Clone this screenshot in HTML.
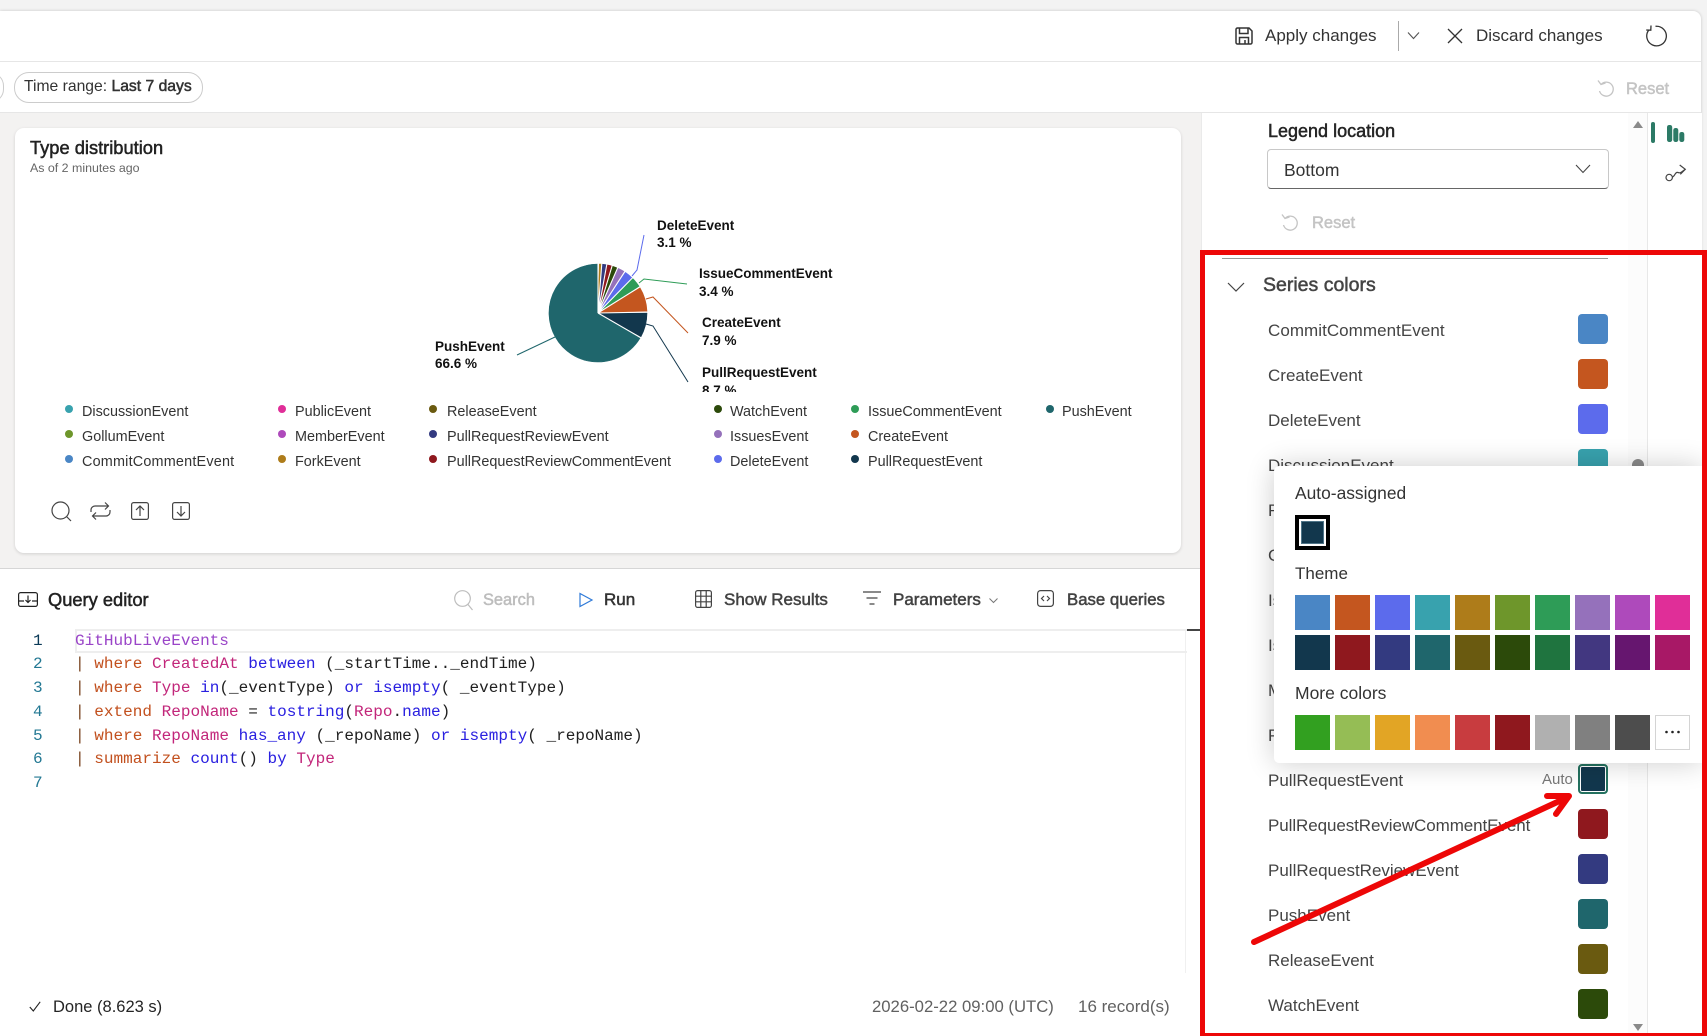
<!DOCTYPE html>
<html><head><meta charset="utf-8"><title>Type distribution</title>
<style>
html,body{margin:0;padding:0;width:1707px;height:1036px;overflow:hidden;background:#f3f3f3}
body{position:relative;font-family:"Liberation Sans",sans-serif;color:#242424}
.a{position:absolute}
.t{position:absolute;white-space:nowrap;line-height:24px;height:24px}
.s{-webkit-text-stroke:.5px currentColor}
svg{position:absolute;overflow:visible}
.ui{font-size:17px;color:#333}
.lg{font-size:14.4px;color:#333}
.dot{position:absolute;width:8px;height:8px;border-radius:50%}
.cl{font-size:13.5px;font-weight:700;color:#111}
.row{font-size:17px;color:#444}
.sw{position:absolute;left:1578px;width:30px;height:30px;border-radius:4px}
.pc{position:absolute;width:35px;height:35px}
.tb{font-size:17px;color:#424242;-webkit-text-stroke:.5px currentColor}
.code{font-family:"Liberation Mono",monospace;font-size:16.05px;color:#1f1f1f}
.n{font-family:"Liberation Mono",monospace;font-size:16.05px;color:#237893}
.k{color:#c2501e}.f{color:#c2267a}.u{color:#2a20e0}.p{color:#7a4520}
</style></head><body>

<!-- main surface -->
<div class="a" style="left:0;top:11px;width:1701px;height:1025px;background:#fff;border-top-right-radius:8px;box-shadow:0 0 3px rgba(0,0,0,.18)"></div>
<div class="a" style="left:0;top:61px;width:1701px;height:1px;background:#e6e6e6"></div>
<div class="a" style="left:0;top:112px;width:1701px;height:1px;background:#e6e6e6"></div>
<div class="a" style="left:0;top:113px;width:1201px;height:455px;background:#f3f2f1"></div>
<div class="a" style="left:0;top:568px;width:1201px;height:1px;background:#d6d6d6"></div>

<!-- toolbar -->
<svg style="left:1235px;top:27px" width="18" height="18" viewBox="0 0 18 18" fill="none" stroke="#333" stroke-width="1.5"><path d="M1 2.500A1.500 1.500 0 0 1 2.500 1H14l3 3v11.500A1.500 1.500 0 0 1 15.500 17h-13A1.500 1.500 0 0 1 1 15.500z"/><path d="M4.500 1v5.500h8.500V1M4.500 17v-6.500h9V17M10 13v4"/></svg>
<div class="t ui" style="left:1265px;top:24px">Apply changes</div>
<div class="a" style="left:1398px;top:21px;width:1px;height:30px;background:#aaa"></div>
<svg style="left:1407px;top:31px" width="13" height="9" viewBox="0 0 13 9" fill="none" stroke="#555" stroke-width="1.100"><path d="M1 1.500l5.500 6 5.500-6"/></svg>
<svg style="left:1447px;top:28px" width="16" height="16" viewBox="0 0 16 16" fill="none" stroke="#333" stroke-width="1.300"><path d="M1 1l14 14M15 1L1 15"/></svg>
<div class="t ui" style="left:1476px;top:24px">Discard changes</div>
<svg style="left:1644px;top:25px" width="22" height="22" viewBox="0 0 22 22" fill="none" stroke="#333" stroke-width="1.300"><path d="M5 4.800A9.800 9.800 0 1 0 11.500 1.300"/><path d="M7 .5L6.800 5.200 2.200 5"/></svg>

<!-- filter bar -->
<div class="a" style="left:-24px;top:72px;width:26px;height:29px;border:1px solid #ccc;border-radius:15px"></div>
<div class="a" style="left:14px;top:72px;width:187px;height:29px;border:1px solid #ccc;border-radius:15px;background:#fff"></div>
<div class="t" style="left:24px;top:75px;font-size:15.700px;color:#333">Time range: <span class="s">Last 7 days</span></div>
<svg style="left:1597px;top:79px" width="18" height="20" viewBox="0 0 18 20" fill="none" stroke="#c4c4c4" stroke-width="1.300"><path d="M4 5.500A7 7 0 1 1 2.500 12"/><path d="M1 1.500l3 4 4.500-1.500"/></svg>
<div class="t s" style="left:1626px;top:77px;font-size:16.500px;color:#c4c4c4">Reset</div>

<!-- chart card -->
<div class="a" style="left:15px;top:128px;width:1166px;height:425px;background:#fff;border-radius:9px;box-shadow:0 1px 3px rgba(0,0,0,.14)"></div>
<div class="t s" style="left:30px;top:136px;font-size:18.300px;color:#222">Type distribution</div>
<div class="t" style="left:30px;top:156px;font-size:12.400px;color:#666">As of 2 minutes ago</div>

<svg style="left:0;top:0" width="1707" height="1036">
<g stroke-width=".6" stroke-linejoin="round">
<path stroke="#1f666c" fill="#1f666c" d="M598 313L640 338.200A49 49 0 1 1 598 264Z"/>
<path stroke="#12374d" fill="#12374d" d="M598 313L647 313A49 49 0 0 1 640.900 336.800Z"/>
<path stroke="#c4561f" fill="#c4561f" d="M598 313L640 287.800A49 49 0 0 1 647 311.300Z"/>
<path stroke="#2e9c57" fill="#2e9c57" d="M598 313L632.600 278.400A49 49 0 0 1 639.100 286.300Z"/>
<path stroke="#5c6bec" fill="#5c6bec" d="M598 313L625.400 272.400A49 49 0 0 1 632 277.800Z"/>
<path stroke="#9571bb" fill="#9571bb" d="M598 313L618.300 268.400A49 49 0 0 1 624.700 271.900Z"/>
<path stroke="#2c4a0a" fill="#2c4a0a" d="M598 313L612.700 266.300A49 49 0 0 1 617.500 268.100Z"/>
<path stroke="#8f181e" fill="#8f181e" d="M598 313L607.300 264.900A49 49 0 0 1 611.900 266Z"/>
<path stroke="#333a80" fill="#333a80" d="M598 313L602.300 264.200A49 49 0 0 1 606.500 264.700Z"/>
<path stroke="#ae7c1a" fill="#ae7c1a" d="M598 313L599.300 264A49 49 0 0 1 601.400 264.100Z"/>
</g>
<path fill="none" stroke="#fff" stroke-width="1.100" d="M598 313L598 262M598 313L601.900 262.200M598 313L607.100 262.800M598 313L612.600 264.200M598 313L618.300 266.300M598 313L625.600 270.300M598 313L633.700 276.600M598 313L641.200 286M598 313L649 312.100M598 313L642.100 338.500"/>
<g fill="none" stroke-width="1">
<path stroke="#5c6bec" d="M644 235L637 270L632 276"/>
<path stroke="#2e9c57" d="M687 284L644 279L639 283"/>
<path stroke="#c4561f" d="M688 333L653 297L646 299"/>
<path stroke="#12374d" d="M688 382L653 326L646 324"/>
<path stroke="#1f666c" d="M517 355L555 337"/>
</g>
</svg>
<div class="t cl" style="left:657px;top:214px">DeleteEvent</div><div class="t cl" style="left:657px;top:231px">3.1 %</div>
<div class="t cl" style="left:699px;top:262px">IssueCommentEvent</div><div class="t cl" style="left:699px;top:280px">3.4 %</div>
<div class="t cl" style="left:702px;top:311px">CreateEvent</div><div class="t cl" style="left:702px;top:329px">7.9 %</div>
<div class="t cl" style="left:702px;top:361px">PullRequestEvent</div>
<div class="a" style="left:702px;top:380px;width:80px;height:12px;overflow:hidden"><div class="t cl" style="left:0;top:-1px">8.7 %</div></div>
<div class="t cl" style="left:435px;top:335px">PushEvent</div><div class="t cl" style="left:435px;top:352px">66.6 %</div>

<!-- legend -->
<span class="dot" style="left:65px;top:405px;background:#38a2ae"></span><div class="t lg" style="left:82px;top:400px">DiscussionEvent</div>
<span class="dot" style="left:65px;top:430px;background:#6e962b"></span><div class="t lg" style="left:82px;top:425px">GollumEvent</div>
<span class="dot" style="left:65px;top:455px;background:#4a86c5"></span><div class="t lg" style="left:82px;top:450px;letter-spacing:.2px">CommitCommentEvent</div>
<span class="dot" style="left:278px;top:405px;background:#e02e98"></span><div class="t lg" style="left:295px;top:400px">PublicEvent</div>
<span class="dot" style="left:278px;top:430px;background:#ae4abb"></span><div class="t lg" style="left:295px;top:425px">MemberEvent</div>
<span class="dot" style="left:278px;top:455px;background:#ae7c1a"></span><div class="t lg" style="left:295px;top:450px">ForkEvent</div>
<span class="dot" style="left:429px;top:405px;background:#6a5a10"></span><div class="t lg" style="left:447px;top:400px">ReleaseEvent</div>
<span class="dot" style="left:429px;top:430px;background:#333a80"></span><div class="t lg" style="left:447px;top:425px">PullRequestReviewEvent</div>
<span class="dot" style="left:429px;top:455px;background:#8f181e"></span><div class="t lg" style="left:447px;top:450px">PullRequestReviewCommentEvent</div>
<span class="dot" style="left:714px;top:405px;background:#2c4a0a"></span><div class="t lg" style="left:730px;top:400px">WatchEvent</div>
<span class="dot" style="left:714px;top:430px;background:#9571bb"></span><div class="t lg" style="left:730px;top:425px">IssuesEvent</div>
<span class="dot" style="left:714px;top:455px;background:#5c6bec"></span><div class="t lg" style="left:730px;top:450px">DeleteEvent</div>
<span class="dot" style="left:851px;top:405px;background:#2e9c57"></span><div class="t lg" style="left:868px;top:400px">IssueCommentEvent</div>
<span class="dot" style="left:851px;top:430px;background:#c4561f"></span><div class="t lg" style="left:868px;top:425px">CreateEvent</div>
<span class="dot" style="left:851px;top:455px;background:#12374d"></span><div class="t lg" style="left:868px;top:450px">PullRequestEvent</div>
<span class="dot" style="left:1046px;top:405px;background:#1f666c"></span><div class="t lg" style="left:1062px;top:400px">PushEvent</div>

<!-- chart tool icons -->
<svg style="left:51px;top:501px" width="21" height="21" viewBox="0 0 21 21" fill="none" stroke="#444" stroke-width="1.200"><circle cx="9.500" cy="9.500" r="8.500"/><path d="M15.500 15.500L20 20"/></svg>
<svg style="left:90px;top:501px" width="21" height="20" viewBox="0 0 21 20" fill="none" stroke="#444" stroke-width="1.200"><path d="M1 11V9a4 4 0 0 1 4-4h13M15 1.500L18.500 5 15 8.500"/><path d="M20 9v2a4 4 0 0 1-4 4H3M6 11.500L2.500 15 6 18.500"/></svg>
<svg style="left:131px;top:502px" width="18" height="18" viewBox="0 0 18 18" fill="none" stroke="#444" stroke-width="1.200"><rect x=".6" y=".6" width="16.800" height="16.800" rx="2"/><path d="M9 14V4M5 8l4-4 4 4"/></svg>
<svg style="left:172px;top:502px" width="18" height="18" viewBox="0 0 18 18" fill="none" stroke="#444" stroke-width="1.200"><rect x=".6" y=".6" width="16.800" height="16.800" rx="2"/><path d="M9 4v10M5 10l4 4 4-4"/></svg>

<!-- query editor toolbar -->
<svg style="left:18px;top:592px" width="20" height="15" viewBox="0 0 20 15" fill="none" stroke="#222" stroke-width="1.200"><rect x=".6" y=".6" width="18.800" height="13.800" rx="2"/><path d="M1 9h5M14 9h5M10 3.500v6.500M7.500 8l2.500 2.500L12.500 8"/></svg>
<div class="t s" style="left:48px;top:588px;font-size:18.300px;color:#222">Query editor</div>
<svg style="left:454px;top:590px" width="19" height="21" viewBox="0 0 19 21" fill="none" stroke="#bdbdbd" stroke-width="1.200"><circle cx="8.500" cy="8.500" r="7.800"/><path d="M14 14.500L18.500 20"/></svg>
<div class="t tb" style="left:483px;top:588px;font-size:16.400px;color:#bdbdbd">Search</div>
<svg style="left:579px;top:592px" width="14" height="16" viewBox="0 0 14 16" fill="none" stroke="#2f7ad8" stroke-width="1.200"><path d="M1 1.500L13 8 1 14.500z"/></svg>
<div class="t tb" style="left:604px;top:588px;color:#333">Run</div>
<svg style="left:695px;top:590px" width="17" height="18" viewBox="0 0 17 18" fill="none" stroke="#444" stroke-width="1.200"><rect x=".6" y=".6" width="15.800" height="16.800" rx="2"/><path d="M5.800 1v16M11.200 1v16M1 6.200h15M1 11.800h15"/></svg>
<div class="t tb" style="left:724px;top:588px">Show Results</div>
<svg style="left:863px;top:591px" width="18" height="14" viewBox="0 0 18 14" fill="none" stroke="#444" stroke-width="1.200"><path d="M0 1h18M3.500 7h11M6.500 13h5"/></svg>
<div class="t tb" style="left:893px;top:588px">Parameters</div>
<svg style="left:989px;top:598px" width="9" height="6" viewBox="0 0 9 6" fill="none" stroke="#777" stroke-width="1"><path d="M.5 .5l4 4 4-4"/></svg>
<svg style="left:1037px;top:590px" width="17" height="17" viewBox="0 0 17 17" fill="none" stroke="#444" stroke-width="1.200"><rect x=".6" y=".6" width="15.800" height="15.800" rx="3"/><path d="M7 6L4.500 8.500 7 11M10 6l2.500 2.500L10 11"/></svg>
<div class="t tb" style="left:1067px;top:588px;font-size:16.800px">Base queries</div>
<div class="a" style="left:1185px;top:629px;width:16px;height:1.500px;background:#444"></div>
<div class="a" style="left:1185px;top:630px;width:1px;height:343px;background:#f0f0f0"></div>

<!-- code editor -->
<div class="a" style="left:75px;top:629px;width:1110px;height:20px;border:2px solid #eee;border-right:0"></div>
<div class="t n" style="left:33px;top:629px;color:#0b3a57">1</div>
<div class="t n" style="left:33px;top:652px">2</div>
<div class="t n" style="left:33px;top:676px">3</div>
<div class="t n" style="left:33px;top:700px">4</div>
<div class="t n" style="left:33px;top:724px">5</div>
<div class="t n" style="left:33px;top:747px">6</div>
<div class="t n" style="left:33px;top:771px">7</div>
<div class="t code" style="left:75px;top:629px;color:#9a45c8">GitHubLiveEvents</div>
<div class="t code" style="left:75px;top:652px"><span class="p">|</span> <span class="k">where</span> <span class="f">CreatedAt</span> <span class="u">between</span> (_startTime.._endTime)</div>
<div class="t code" style="left:75px;top:676px"><span class="p">|</span> <span class="k">where</span> <span class="f">Type</span> <span class="u">in</span>(_eventType) <span class="u">or</span> <span class="u">isempty</span>( _eventType)</div>
<div class="t code" style="left:75px;top:700px"><span class="p">|</span> <span class="k">extend</span> <span class="f">RepoName</span> = <span class="u">tostring</span>(<span class="f">Repo</span>.<span class="u">name</span>)</div>
<div class="t code" style="left:75px;top:724px"><span class="p">|</span> <span class="k">where</span> <span class="f">RepoName</span> <span class="u">has_any</span> (_repoName) <span class="u">or</span> <span class="u">isempty</span>( _repoName)</div>
<div class="t code" style="left:75px;top:747px"><span class="p">|</span> <span class="k">summarize</span> <span class="u">count</span>() <span class="u">by</span> <span class="f">Type</span></div>

<!-- status -->
<svg style="left:29px;top:1001px" width="12" height="11" viewBox="0 0 12 11" fill="none" stroke="#222" stroke-width="1.100"><path d="M.8 6l3.500 4L11.200 .8"/></svg>
<div class="t" style="left:53px;top:995px;font-size:16.500px;color:#242424">Done (8.623 s)</div>
<div class="t" style="left:872px;top:995px;font-size:16.700px;color:#616161">2026-02-22 09:00 (UTC)</div>
<div class="t" style="left:1078px;top:995px;font-size:17px;color:#616161">16 record(s)</div>

<!-- right panel -->
<div class="a" style="left:1201px;top:113px;width:500px;height:923px;background:#fff;border-left:1px solid #eaeaea"></div>
<div class="a" style="left:1628px;top:113px;width:19px;height:923px;background:#fcfcfc"></div>
<div class="a" style="left:1647px;top:113px;width:1px;height:923px;background:#e8e8e8"></div>
<div class="a" style="left:1651px;top:122px;width:4px;height:21px;background:#2c7a66;border-radius:2px"></div>
<svg style="left:1667px;top:125px" width="18" height="17" viewBox="0 0 18 17" fill="#2c7a66"><rect x="0" y="0" width="5.200" height="17" rx="2.200"/><rect x="6.300" y="3" width="5" height="14" rx="2.200"/><rect x="12.300" y="7" width="5" height="10" rx="2.200"/></svg>
<svg style="left:1665px;top:165px" width="22" height="18" viewBox="0 0 22 18" fill="none" stroke="#444" stroke-width="1.200"><circle cx="4.200" cy="12.500" r="3.200"/><path d="M7.300 12C10 11.500 10 6.500 13 7.500S16 7 20.300 4.300"/><path d="M14.700 0L20.300 4.300 15.300 9.300"/></svg>
<div class="t s" style="left:1268px;top:119px;font-size:18px;color:#242424">Legend location</div>
<div class="a" style="left:1267px;top:149px;width:340px;height:38px;border:1px solid #c8c8c8;border-bottom:1.500px solid #666;border-radius:4px;background:#fff"></div>
<div class="t" style="left:1284px;top:158px;font-size:17.500px;color:#333">Bottom</div>
<svg style="left:1575px;top:164px" width="16" height="10" viewBox="0 0 16 10" fill="none" stroke="#444" stroke-width="1.100"><path d="M1 1l7 7.500L15 1"/></svg>
<svg style="left:1281px;top:213px" width="18" height="20" viewBox="0 0 18 20" fill="none" stroke="#c4c4c4" stroke-width="1.300"><path d="M4 5.500A7 7 0 1 1 2.500 12"/><path d="M1 1.500l3 4 4.500-1.500"/></svg>
<div class="t s" style="left:1312px;top:211px;font-size:16.500px;color:#c4c4c4">Reset</div>
<div class="a" style="left:1222px;top:258px;width:386px;height:1px;background:#999"></div>
<svg style="left:1227px;top:282px" width="18" height="10" viewBox="0 0 18 10" fill="none" stroke="#444" stroke-width="1.200"><path d="M1 1l8 8 8-8"/></svg>
<div class="t s" style="left:1263px;top:273px;font-size:19.500px;color:#444">Series colors</div>

<div class="t row" style="left:1268px;top:319px;letter-spacing:.05px">CommitCommentEvent</div><div class="sw" style="top:314px;background:#4a86c5"></div>
<div class="t row" style="left:1268px;top:364px">CreateEvent</div><div class="sw" style="top:359px;background:#c4561f"></div>
<div class="t row" style="left:1268px;top:409px">DeleteEvent</div><div class="sw" style="top:404px;background:#5c6bec"></div>
<div class="t row" style="left:1268px;top:454px">DiscussionEvent</div><div class="sw" style="top:449px;background:#38a2ae"></div>
<div class="t row" style="left:1268px;top:499px">ForkEvent</div>
<div class="t row" style="left:1268px;top:544px">GollumEvent</div>
<div class="t row" style="left:1268px;top:589px">IssueCommentEvent</div>
<div class="t row" style="left:1268px;top:634px">IssuesEvent</div>
<div class="t row" style="left:1268px;top:679px">MemberEvent</div>
<div class="t row" style="left:1268px;top:724px">PublicEvent</div>
<div class="t row" style="left:1268px;top:769px">PullRequestEvent</div>
<div class="t" style="left:1542px;top:768px;font-size:15px;color:#777">Auto</div>
<div class="a" style="left:1578px;top:764px;width:26px;height:26px;border:2px solid #24715f;border-radius:4px;background:#12374d;box-shadow:inset 0 0 0 1px #fff"></div>
<div class="t row" style="left:1268px;top:814px;letter-spacing:-.08px">PullRequestReviewCommentEvent</div><div class="sw" style="top:809px;background:#8f181e"></div>
<div class="t row" style="left:1268px;top:859px">PullRequestReviewEvent</div><div class="sw" style="top:854px;background:#333a80"></div>
<div class="t row" style="left:1268px;top:904px">PushEvent</div><div class="sw" style="top:899px;background:#1f666c"></div>
<div class="t row" style="left:1268px;top:949px">ReleaseEvent</div><div class="sw" style="top:944px;background:#6a5a10"></div>
<div class="t row" style="left:1268px;top:994px">WatchEvent</div><div class="sw" style="top:989px;background:#2c4a0a"></div>

<!-- scrollbar -->
<svg style="left:1632px;top:120px" width="12" height="9" viewBox="0 0 12 9" fill="#8a8a8a"><path d="M6 1l5 7H1z"/></svg>
<div class="a" style="left:1632px;top:459px;width:12px;height:14px;border-radius:6px;background:#8a8a8a"></div>
<svg style="left:1632px;top:1023px" width="12" height="10" viewBox="0 0 12 10" fill="#8a8a8a"><path d="M6 8L1 1h10z"/></svg>

<!-- colour popup -->
<div class="a" style="left:1274px;top:466px;width:428px;height:297px;background:#fff;border-radius:5px 0 0 5px;box-shadow:0 0 28px rgba(0,0,0,.2)"></div>
<div class="t" style="left:1295px;top:481px;font-size:17.400px;color:#333">Auto-assigned</div>
<div class="a" style="left:1295px;top:515px;width:35px;height:35px;box-sizing:border-box;border:4px solid #000;background:#fff"></div>
<div class="a" style="left:1301px;top:521px;width:23px;height:23px;box-sizing:border-box;border:1px solid #4e7488;background:#12374d"></div>
<div class="t" style="left:1295px;top:562px;font-size:17px;color:#333">Theme</div>
<div class="pc" style="left:1295px;top:595px;background:#4a86c5"></div>
<div class="pc" style="left:1335px;top:595px;background:#c4561f"></div>
<div class="pc" style="left:1375px;top:595px;background:#5c6bec"></div>
<div class="pc" style="left:1415px;top:595px;background:#38a2ae"></div>
<div class="pc" style="left:1455px;top:595px;background:#ae7c1a"></div>
<div class="pc" style="left:1495px;top:595px;background:#6e962b"></div>
<div class="pc" style="left:1535px;top:595px;background:#2e9c57"></div>
<div class="pc" style="left:1575px;top:595px;background:#9571bb"></div>
<div class="pc" style="left:1615px;top:595px;background:#ae4abb"></div>
<div class="pc" style="left:1655px;top:595px;background:#e02e98"></div>
<div class="pc" style="left:1295px;top:635px;background:#12374d"></div>
<div class="pc" style="left:1335px;top:635px;background:#8f181e"></div>
<div class="pc" style="left:1375px;top:635px;background:#333a80"></div>
<div class="pc" style="left:1415px;top:635px;background:#1f666c"></div>
<div class="pc" style="left:1455px;top:635px;background:#6a5a10"></div>
<div class="pc" style="left:1495px;top:635px;background:#2c4a0a"></div>
<div class="pc" style="left:1535px;top:635px;background:#1f743f"></div>
<div class="pc" style="left:1575px;top:635px;background:#423780"></div>
<div class="pc" style="left:1615px;top:635px;background:#66166f"></div>
<div class="pc" style="left:1655px;top:635px;background:#a81866"></div>
<div class="t" style="left:1295px;top:681px;font-size:17.500px;color:#333">More colors</div>
<div class="pc" style="left:1295px;top:715px;background:#32a020"></div>
<div class="pc" style="left:1335px;top:715px;background:#95bd55"></div>
<div class="pc" style="left:1375px;top:715px;background:#e2a525"></div>
<div class="pc" style="left:1415px;top:715px;background:#f18d50"></div>
<div class="pc" style="left:1455px;top:715px;background:#c83c3f"></div>
<div class="pc" style="left:1495px;top:715px;background:#8f181e"></div>
<div class="pc" style="left:1535px;top:715px;background:#b0b0b0"></div>
<div class="pc" style="left:1575px;top:715px;background:#808080"></div>
<div class="pc" style="left:1615px;top:715px;background:#4d4d4d"></div>
<div class="pc" style="left:1655px;top:715px;box-sizing:border-box;border:1px solid #d4d4d4;background:#fff"></div>
<svg style="left:1664px;top:730px" width="18" height="4" viewBox="0 0 18 4" fill="#222"><circle cx="2.500" cy="2" r="1.300"/><circle cx="8.500" cy="2" r="1.300"/><circle cx="14.500" cy="2" r="1.300"/></svg>

<!-- annotation -->
<div class="a" style="left:1200px;top:250px;width:507px;height:786px;box-sizing:border-box;border-style:solid;border-color:#ed0707;border-width:5px 5px 3px 5px"></div>
<svg style="left:0;top:0" width="1707" height="1036" fill="none" stroke="#ed0707" stroke-linecap="round" stroke-linejoin="round"><path stroke-width="6" d="M1254 942L1566 798"/><path stroke-width="6" d="M1547 796L1569 796L1556 814"/></svg>
</body></html>
